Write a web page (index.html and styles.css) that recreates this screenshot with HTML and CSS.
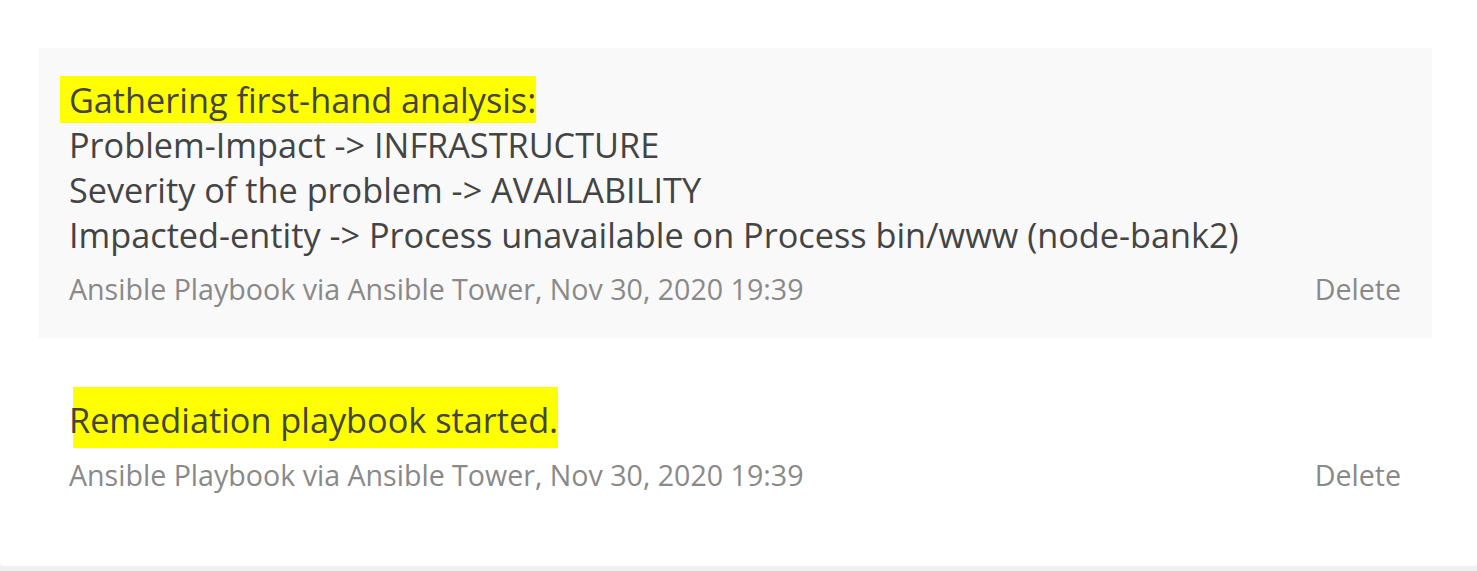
FILE: index.html
```html
<!DOCTYPE html>
<html lang="en">
<head>
<meta charset="utf-8">
<title>Comments</title>
<link rel="stylesheet" href="styles.css">
</head>
<body>
<div class="panel">
  <div class="comment comment--shaded">
    <div class="comment-body"><span class="mark mark--lead">&nbsp;Gathering first-hand analysis:</span><br>Problem-Impact -&gt; INFRASTRUCTURE<br>Severity of the problem -&gt; AVAILABILITY<br>Impacted-entity -&gt; Process unavailable on Process bin/www (node-bank2)</div>
    <div class="comment-meta">
      <span class="meta-text">Ansible Playbook via Ansible Tower, Nov 30, 2020 19:39</span>
      <span class="delete">Delete</span>
    </div>
  </div>
  <div class="comment comment--plain">
    <div class="comment-body comment-body--single"><span class="mark mark--block">Remediation playbook started.</span></div>
    <div class="comment-meta">
      <span class="meta-text">Ansible Playbook via Ansible Tower, Nov 30, 2020 19:39</span>
      <span class="delete">Delete</span>
    </div>
  </div>
</div>
</body>
</html>
```
FILE: styles.css
```css
html, body {
  margin: 0;
  padding: 0;
}
body {
  background: #f0f0f0;
  font-family: "Open Sans", "Noto Sans", sans-serif;
  color: #454646;
}
.panel {
  background: #ffffff;
  height: 566px;
  box-sizing: border-box;
  padding: 48px 45px 0 38px;
  border-radius: 0 0 4px 4px;
  display: flex;
  flex-direction: column;
  gap: 20px;
}
.comment {
  padding: 29px 31px 29px 31px;
}
.comment--shaded {
  background: #f9f9f9;
}
.comment-body {
  font-size: 34.25px;
  line-height: 45px;
  color: #434444;
}
.comment-body--single {
  display: flex;
}
.mark {
  background: #ffff00;
}
.mark--lead {
  margin-left: -9px;
}
.mark--block {
  display: block;
  padding: 10px 0 6px;
  margin-left: 4px;
  margin-bottom: -5px;
  text-indent: -4px;
}
.comment-meta {
  margin-top: 12px;
  display: flex;
  justify-content: space-between;
  align-items: baseline;
  font-size: 28.6px;
  line-height: 40px;
  color: #898989;
}
.delete {
  cursor: pointer;
}
```
